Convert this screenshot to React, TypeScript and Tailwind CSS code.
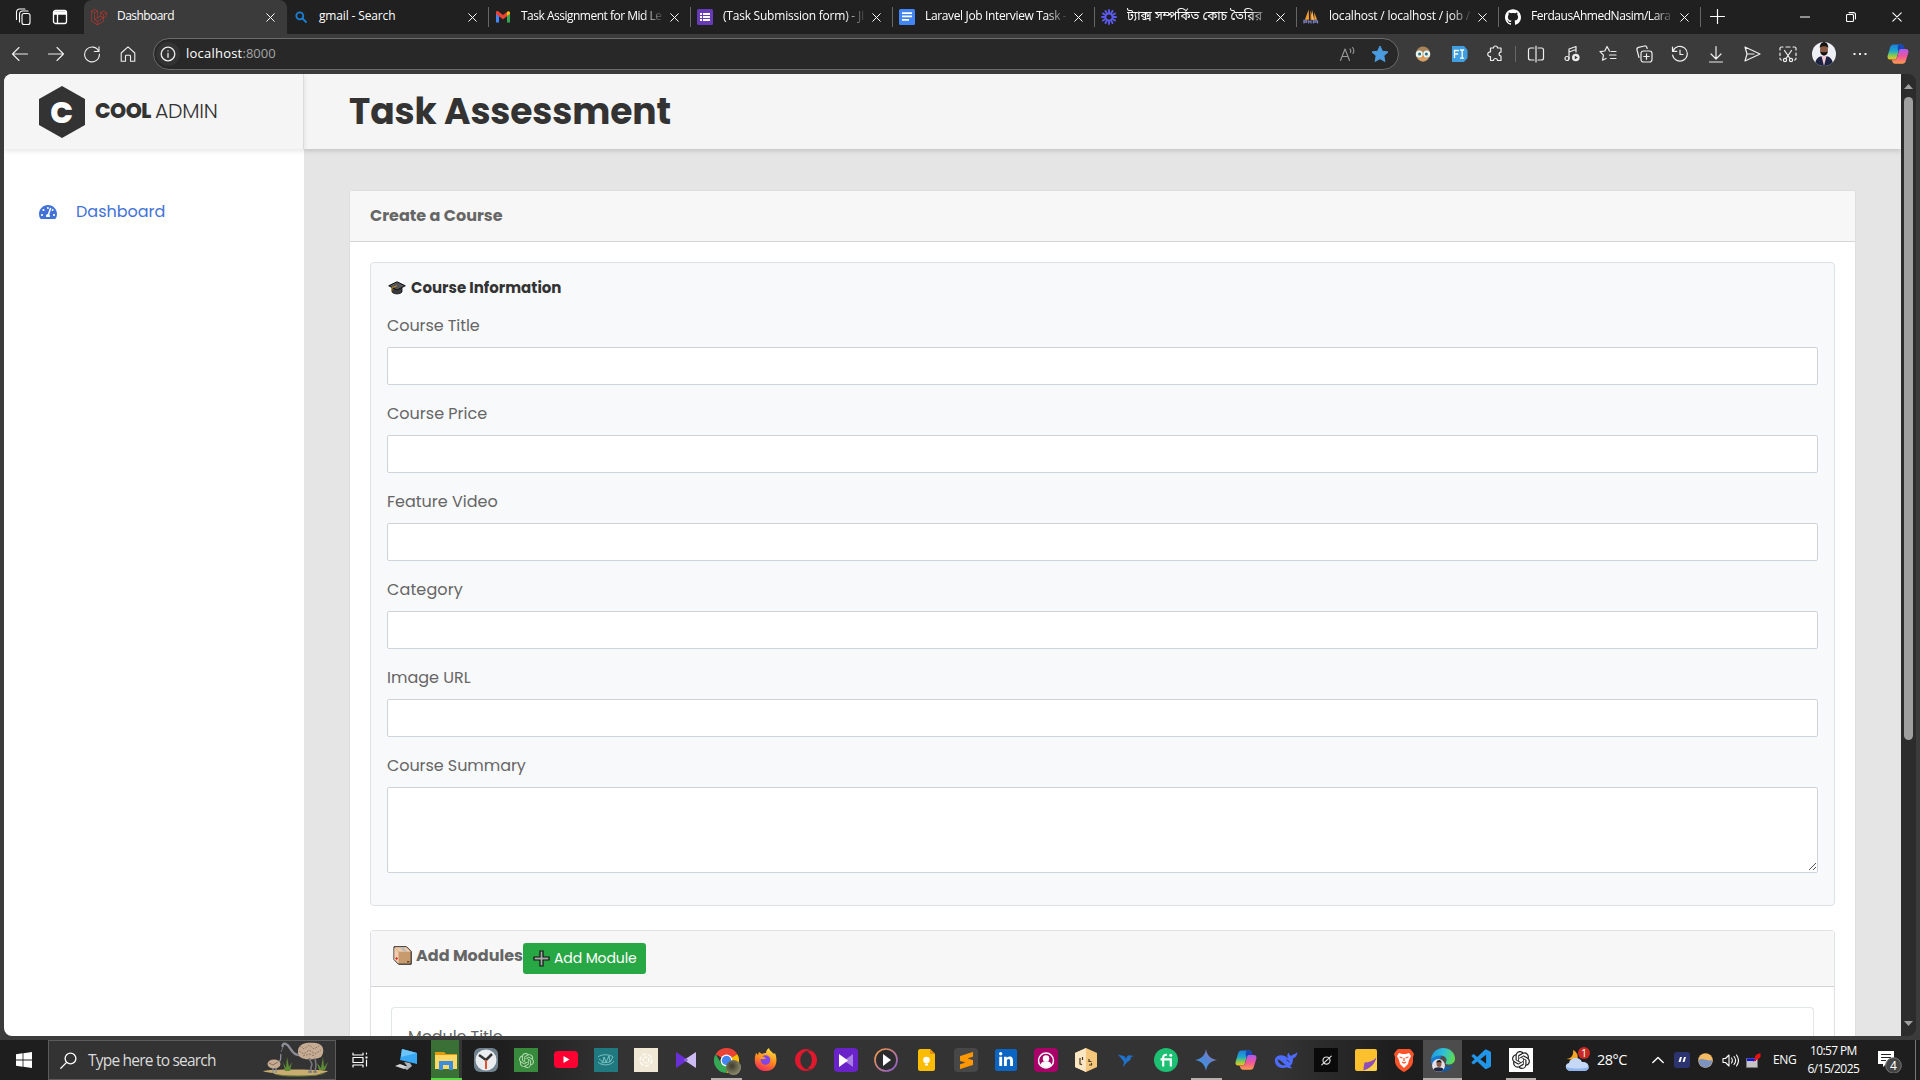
import React, { useLayoutEffect, useRef, useState } from "react";
import {
  SiLaravel, SiGithub, SiOpenai, SiSublimetext, SiOpera,
} from "react-icons/si";
import { FaLinkedinIn, FaTachometerAlt } from "react-icons/fa";
import { VscVscode } from "react-icons/vsc";

/* Text set to a given advance width through letter spacing. */
function Fit({ w, children, className = "" }: { w: number; children: string; className?: string }) {
  const ref = useRef<HTMLSpanElement>(null);
  const [ls, setLs] = useState(0);
  useLayoutEffect(() => {
    if (ref.current) setLs((w - ref.current.offsetWidth) / children.length);
  }, []);
  return (
    <span ref={ref} className={"inline-block whitespace-nowrap " + className} style={{ letterSpacing: ls + "px" }}>
      {children}
    </span>
  );
}

type SvgProps = { size?: number; box?: string; className?: string; children: React.ReactNode; sw?: number };
const Line = ({ size = 18, box = "0 0 18 18", className = "", children, sw = 1.1 }: SvgProps) => (
  <svg width={size} height={size} viewBox={box} fill="none" stroke="currentColor" strokeWidth={sw} strokeLinecap="round" strokeLinejoin="round" className={"shrink-0 " + className}>
    {children}
  </svg>
);

const X = ({ size = 9 }: { size?: number }) => (
  <Line size={size} box="0 0 10 10"><path d="M.8.8l8.4 8.4M9.2.8L.8 9.2" /></Line>
);

function Copilot({ size = 22 }: { size?: number }) {
  return (
    <svg width={size} height={size} viewBox="0 0 24 24" className="shrink-0">
      <defs>
        <linearGradient id="cpa" x1="0" y1="0" x2="0" y2="1"><stop offset="0" stopColor="#1b7de0" /><stop offset=".45" stopColor="#1fa8c9" /><stop offset=".75" stopColor="#8ccb4a" /><stop offset="1" stopColor="#f5c518" /></linearGradient>
        <linearGradient id="cpb" x1="0" y1="0" x2="0" y2="1"><stop offset="0" stopColor="#a95bf0" /><stop offset=".5" stopColor="#f0559a" /><stop offset="1" stopColor="#fb9a4b" /></linearGradient>
      </defs>
      <path d="M7 1.5h8.5c1.4 0 2.2.8 2.6 2L19 7h-3.5c-1.7 0-2.5.9-3 2.5L10.600 16c-.5 1.500-1.200 2-2.600 2H3.500C1 18 .2 16.500.7 14L3.500 4.500C4.100 2.500 5.200 1.500 7 1.500z" fill="url(#cpa)" />
      <path d="M12.500 1.500h3.200c1.400 0 2.200.8 2.600 2L19 7h-3.500c-1.700 0-2.400.9-3 2.500l-1-4z" fill="#1647b5" />
      <path d="M17 22.500H8.500c-1.400 0-2.200-.8-2.600-2L5 18h3c1.700 0 2.500-.9 3-2.500L13.400 8c.5-1 1.200-1.500 2.600-1.500h4.500c2.500 0 3.300 1.500 2.800 4l-2.800 9c-.6 2-1.700 3-3.500 3z" fill="url(#cpb)" />
    </svg>
  );
}

const favicons: Record<string, React.ReactNode> = {
  laravel: <SiLaravel size={16} color="#d8342b" />,
  search: <Line size={12} box="0 0 12 12" sw={1.8} className="text-[#1a7fd4]"><circle cx="4.800" cy="4.800" r="3.500" /><path d="M7.500 7.500l3.500 3.500" /></Line>,
  gmail: (
    <svg width="16" height="16" viewBox="0 0 16 16"><path d="M1 3.500v10h3V7z" fill="#4285f4" /><path d="M15 3.500v10h-3V7z" fill="#34a853" /><path d="M1 3.500c0-1.500 1.500-1.800 2.500-1L8 6l4.500-3.500V7L8 10.300 1 5.200z" fill="#ea4335" /><path d="M12 7V3c1-1 3-1 3 1v1z" fill="#fbbc04" /></svg>
  ),
  forms: (
    <svg width="16" height="16" viewBox="0 0 16 16"><rect width="16" height="16" rx="1.500" fill="#673ab7" /><path d="M3 4h2v2H3zM6 4h7v2H6zM3 7h2v2H3zM6 7h7v2H6zM3 10h2v2H3zM6 10h7v2H6z" fill="#fff" /></svg>
  ),
  docs: (
    <svg width="16" height="16" viewBox="0 0 16 16"><rect width="16" height="16" rx="1.500" fill="#4285f4" /><path d="M3 3.200h10v1.700H3zM3 6.600h10v1.700H3zM3 10h7v1.700H3z" fill="#fff" /></svg>
  ),
  sun: (
    <svg width="16" height="16" viewBox="0 0 16 16" stroke="#5b5bf0" strokeWidth="1.900" strokeLinecap="round" fill="none">
      {[0, 30, 60, 90, 120, 150, 180, 210, 240, 270, 300, 330].map((a) => <path key={a} d="M8 1v3.200" transform={`rotate(${a} 8 8)`} />)}
      <circle cx="8" cy="8" r="3.400" strokeWidth="1.600" />
    </svg>
  ),
  pma: (
    <svg width="17" height="16" viewBox="0 0 17 16"><path d="M6 0L2 11h4.500zM8 1v10h3.500zM12 3v8h3z" fill="#f59b2d" /><path d="M9.500 0v11h2.500z" fill="#f7b866" /><path d="M1 15v-3.500h3v2H1.500M6 11.500V15M6 13h2.500M8.500 11.500V15M11 15v-3.500h3v2h-2.500M15.500 11.500V15" fill="none" stroke="#7d86c2" strokeWidth="1.200" /></svg>
  ),
  github: <SiGithub size={16} color="#fff" />,
};

const tabs = [
  { icon: "laravel", title: "Dashboard", w: 57 },
  { icon: "search", title: "gmail - Search", w: 76 },
  { icon: "gmail", title: "Task Assignment for Mid Le", w: 141 },
  { icon: "forms", title: "(Task Submission form) - JI", w: 141 },
  { icon: "docs", title: "Laravel Job Interview Task -", w: 141 },
  { icon: "sun", title: "ট্যাক্স সম্পর্কিত কোচ তৈরির", w: 0 },
  { icon: "pma", title: "localhost / localhost / job /", w: 141 },
  { icon: "github", title: "FerdausAhmedNasim/Lara", w: 140 },
];

function TabStrip() {
  return (
    <div className="flex h-[34px] bg-[#202020] text-white">
      <div className="flex w-[84px] items-center gap-[19px] pl-[15px]">
        <Line size={18}><rect x="7" y="5.500" width="8" height="11" rx="2" /><path d="M4.500 14V6a3 3 0 0 1 3-3h5.500M1.500 11.500V4a3 3 0 0 1 3-3H10" /></Line>
        <Line size={16} box="0 0 16 16" sw={1.3}><rect x="1.500" y="1.500" width="13" height="13" rx="2" /><path d="M2 3h12v2H2z" fill="currentColor" /><path d="M5.500 5v9" /></Line>
      </div>
      {tabs.map((t, i) => (
        <div key={t.title} className={"relative flex items-center " + (i === 0 ? "w-[203px] rounded-t-lg bg-[#3b3b3b] pl-[7px]" : "w-[202px] pl-1.5")}>
          <span className="flex w-4 shrink-0 justify-center">{favicons[t.icon]}</span>
          <span className={"ml-[10px] w-[141px] shrink-0 text-[12px] leading-[20px] -translate-y-px " + (i > 1 ? "[mask-image:linear-gradient(to_right,#000_86%,#0002)]" : "")}>
            {t.w ? <Fit w={t.w}>{t.title}</Fit> : <span className="whitespace-nowrap text-[12.5px]">{t.title}</span>}
          </span>
          <span className="ml-[8px]"><X /></span>
          {i > 0 && <span className="absolute right-0 top-[7px] h-5 w-px bg-[#666]" />}
        </div>
      ))}
      <div className="flex grow items-center pl-[9px] -translate-y-px"><Line size={15} box="0 0 14 14"><path d="M7 .5v13M.5 7h13" /></Line></div>
      <div className="flex items-center">
        <span className="flex w-[46px] justify-center"><Line size={10} box="0 0 10 10"><path d="M0 5h10" /></Line></span>
        <span className="flex w-[46px] justify-center"><Line size={10} box="0 0 10 10"><rect x=".5" y="2.500" width="7" height="7" rx="1" /><path d="M3 .6h4.500a2 2 0 0 1 2 2V7" /></Line></span>
        <span className="flex w-[46px] justify-center"><X size={10} /></span>
      </div>
    </div>
  );
}

const Slot = ({ children }: { children: React.ReactNode }) => <span className="flex w-9 shrink-0 items-center justify-center">{children}</span>;

function Toolbar() {
  return (
    <div className="flex h-10 items-center bg-[#3b3b3b] pl-[2px] text-[#eee]">
      <Slot><Line><path d="M16.500 9h-15M8 2.500L1.500 9 8 15.500" /></Line></Slot>
      <Slot><Line><path d="M1.500 9h15M10 2.500L16.500 9 10 15.500" /></Line></Slot>
      <Slot><Line><path d="M15.800 6.500A7.400 7.400 0 1 0 16.400 9M16 1.800v4.700h-4.700" /></Line></Slot>
      <Slot><Line><path d="M2.200 8L9 1.800 15.800 8v8.200h-4.300V11c0-.5-.3-.8-.8-.8H7.300c-.5 0-.8.300-.8.800v5.200H2.200z" /></Line></Slot>
      <div className="ml-[7px] flex h-8 w-[1246px] items-center rounded-full border border-[#6b6b6b] bg-[#282828] pl-[2px] pr-[9px]">
        <span className="flex h-[24px] w-[24px] items-center justify-center rounded-full bg-[#333]">
          <Line size={16} box="0 0 16 16" sw={1.300}><circle cx="8" cy="8" r="6.800" /><path d="M8 7.500v3.800M8 4.800v.2" /></Line>
        </span>
        <span className="ml-[6px] text-[13px]"><Fit w={56} className="text-white">localhost</Fit><Fit w={33} className="text-[#a5a5a5]">:8000</Fit></span>
        <span className="ml-auto flex items-center gap-[14px]">
          <Line className="text-[#999]" sw={1.1}><path d="M1.500 15.500L6 4l4.500 11.500M3 11.500h6M11 4c1 1 1 2.500.5 3.500M13.500 2.500c1.500 1.700 1.500 4.300.5 6" /></Line>
          <svg width="18" height="18" viewBox="0 0 18 18"><path d="M9 1l2.400 5.200 5.600.7-4.200 3.900 1.100 5.700L9 13.700l-4.900 2.800 1.100-5.700L1 6.900l5.600-.7z" fill="#4b9be0" stroke="#4b9be0" strokeLinejoin="round" /></svg>
        </span>
      </div>
      <span className="w-[6px]" />
      <Slot>
        <svg width="16" height="16" viewBox="0 0 16 16"><ellipse cx="8" cy="8" rx="7.300" ry="7.600" fill="#a9835a" /><path d="M3 12c2-2 8-2 10 0-2 4.500-8 4.500-10 0z" fill="#d9a066" /><circle cx="4.300" cy="8" r="3.500" fill="#e8f4f4" /><circle cx="11.700" cy="8" r="3.500" fill="#e8f4f4" /><circle cx="4.600" cy="8" r="1.500" fill="#2b6d73" /><circle cx="11.400" cy="8" r="1.500" fill="#2b6d73" /><path d="M7 10h2l-1 2.500z" fill="#f08a24" /></svg>
      </Slot>
      <Slot>
        <svg width="17" height="16" viewBox="0 0 17 16"><path d="M1 0h12l3.500 4v8L13 16H1z" fill="#3f9fe0" /><path d="M3.500 12V4.500h4.300M3.500 8h3.700M9 4h1.500l.7.700.7-.7h1.200M9 12.200h1.500l.7-.7.7.7h1.200M11.200 4.500v7.200" fill="none" stroke="#fff" strokeWidth="1.300" /></svg>
      </Slot>
      <Slot><Line sw={1.2}><path d="M5 3h2.500a2 2 0 0 1 4 0H15v4.200a1.900 1.900 0 0 0 0 3.800v4.500h-3.500a2 2 0 0 0-4 0H4.500V11.500a2.300 2.300 0 1 1 0-4.500V3z" /></Line></Slot>
      <span className="mx-[2px] h-4 w-px bg-[#666]" />
      <Slot><Line sw={1.2}><path d="M7 3H3.500a2 2 0 0 0-2 2v8c0 1.100.9 2 2 2H7M11 3h3.500c1.100 0 2 .9 2 2v8a2 2 0 0 1-2 2H11M9 1v16" /></Line></Slot>
      <Slot><Line sw={1.2}><circle cx="4" cy="13.500" r="2" /><path d="M6 13.500V4l7-2.500V7M6 7l7-2.500" /><circle cx="12.800" cy="12.500" r="3.800" fill="currentColor" stroke="none" /><path d="M11.800 10.800l3 1.700-3 1.700z" fill="#333" stroke="none" /></Line></Slot>
      <Slot><Line sw={1.2}><path d="M10.500 6L8 1.500 5.800 6 1 6.600l3.500 3.600-1 5L7 13.500M12 6.500h5M10.500 10h6.500M11.500 13.500H17" /></Line></Slot>
      <Slot><Line sw={1.2}><rect x="6" y="6" width="11" height="11" rx="2.500" /><path d="M11.500 8.800v5.400M8.800 11.500h5.400M4 12.500l-2-7.500C1.600 3.500 2 2.700 3.500 2.300l6-1.300c1.300-.2 2 .3 2.400 1.500l.3 1" /></Line></Slot>
      <Slot><Line sw={1.2}><path d="M1.500 2v4.300h4.300M2 6A7.400 7.400 0 1 1 1.600 10M9 5v4.500h3" /></Line></Slot>
      <Slot><Line sw={1.2}><path d="M9 1.500v12M4 9l5 5 5-5M2.500 17h13" /></Line></Slot>
      <Slot><Line sw={1.2}><path d="M2 2l15 7-15 7 2-7zM4 9h7" /></Line></Slot>
      <Slot><Line sw={1.2}><path d="M1 5V3.500C1 2.500 1.500 2 2.500 2H4M7 2h4M14 2h1.500c1 0 1.500.5 1.500 1.500V5M1 8v2.500M17 8v2.500M1 13v.5c0 1 .5 1.500 1.500 1.500M17 13v.5c0 1-.5 1.500-1.500 1.500M5.500 5.500l5.500 8M12.500 5.500L7 13.500" /><circle cx="6" cy="15" r="1.600" /><circle cx="12" cy="15" r="1.600" /></Line></Slot>
      <Slot>
        <svg width="24" height="24" viewBox="0 0 24 24"><clipPath id="av"><circle cx="12" cy="12" r="12" /></clipPath><g clipPath="url(#av)"><rect width="24" height="24" fill="#eef0f6" /><path d="M3 24c0-7 3-10 9-10s9 3 9 10z" fill="#1d2340" /><path d="M9.500 14h5L12 24z" fill="#f3c9d6" /><ellipse cx="12" cy="7.500" rx="4" ry="5.600" fill="#8a5a44" /><path d="M7.800 6c0-8 8.500-8 8.500 0-1.500-2.500-7-2.500-8.500 0zM8.300 9.500c1 1 6.400 1 7.400 0 0 5.500-7.400 5.500-7.400 0z" fill="#181414" /></g></svg>
      </Slot>
      <Slot><svg width="14" height="4"><path d="M.5 1h2v2h-2zM6 1h2v2H6zM11.500 1h2v2h-2z" fill="#eee" /></svg></Slot>
      <span className="ml-[9px]"><Copilot /></span>
    </div>
  );
}

const GradCap = () => (
  <svg width="18" height="14" viewBox="0 0 18 14" className="shrink-0"><path d="M4 6.500v4.500c2 2.500 8 2.500 10 0V6.500z" fill="#3a3a3c" stroke="#111" strokeWidth=".8" /><path d="M.7 4.800L9 .8l8.300 4L9 9z" fill="#55565a" stroke="#111" strokeLinejoin="round" /><path d="M9 4.800L4.200 6.500l-.5 4" fill="none" stroke="#c98a1b" strokeWidth="1" /></svg>
);
const Box = () => (
  <svg width="19" height="19" viewBox="0 0 19 19" className="shrink-0"><path d="M1 .8h12.500L18.200 5.500v12.700H5.500L1 13.500z" fill="#c89b6f" stroke="#111" strokeLinejoin="round" /><path d="M1.300 1.200h12.200L17.800 5.800H5.800z" fill="#ecc9a8" /><path d="M1.300 1.500L5.500 6v11.800l-4.200-4.500z" fill="#f1cdb0" /><path d="M7 1.200h3l4 4.600h-3z" fill="#b9b9b9" /><path d="M3.500 11l1.500 1.500-1.500 1.500L2.300 12.500z" fill="#e02020" /><path d="M14 15h2.500v1.500H14z" fill="#6b4a2a" /></svg>
);

const fields = [
  { label: "Course Title", w: 93 },
  { label: "Course Price", w: 100 },
  { label: "Feature Video", w: 111 },
  { label: "Category", w: 76 },
  { label: "Image URL", w: 84 },
];

function Page() {
  return (
    <div className="flex h-[962px] w-[1912px] overflow-hidden rounded-lg bg-[#2c2c2c] font-['Poppins',Inter,sans-serif] text-[#666]">
      <aside className="flex w-[300px] shrink-0 flex-col bg-white">
        <div className="z-10 flex h-[75px] shrink-0 items-center border-r border-[#dadada] bg-[#f5f5f5] pl-[35px] text-[#333] shadow-[0_2px_5px_rgba(0,0,0,0.1)]">
          <svg width="46" height="52" viewBox="0 0 46 52"><path d="M23 0l23 13v26L23 52 0 39V13z" fill="#333" /><text x="22.500" y="36.500" textAnchor="middle" fontFamily="Poppins, Lato, sans-serif" fontWeight="800" fontSize="30" fill="#fff">C</text></svg>
          <span className="ml-[10px] text-[20.500px]"><Fit w={56} className="font-extrabold">COOL</Fit><Fit w={63} className="ml-[4px] font-light">ADMIN</Fit></span>
        </div>
        <div className="mt-[47px] flex h-8 items-center pl-[35px] text-[16px] text-[#4272d7]">
          <FaTachometerAlt size={18} />
          <Fit w={89} className="ml-[19px]">Dashboard</Fit>
        </div>
      </aside>
      <main className="flex w-[1597px] shrink-0 flex-col bg-[#e5e5e5]">
        <header className="h-[75px] shrink-0 bg-[#f5f5f5] pl-[45px] text-[36px] font-bold leading-[76px] text-[#333] shadow-[0_2px_5px_rgba(0,0,0,0.15)]">
          <Fit w={322}>Task Assessment</Fit>
        </header>
        <div className="mx-[45px] mt-[41px] h-[900px] shrink-0 rounded-t-[3px] border border-[#dedede] bg-white">
          <div className="flex h-[51px] items-center rounded-t-[3px] border-b border-[#d4d5d8] bg-[#f7f7f7] pl-5 text-[16px] font-bold"><Fit w={133}>Create a Course</Fit></div>
          <div className="mx-5 mt-5">
            <section className="h-[644px] rounded border border-[#dee2e6] bg-[#f8f9fb] px-4 pt-[16px]">
              <h2 className="flex h-[18px] items-center gap-[5px] pl-[1px] text-[15px] font-bold text-[#333]"><GradCap /><Fit w={150}>Course Information</Fit></h2>
              <div className="mt-[12px]">
                {fields.map((f) => (
                  <div key={f.label} className="h-[88px]">
                    <label className="flex h-[37px] items-center pb-[3px] text-[16px]"><Fit w={f.w}>{f.label}</Fit></label>
                    <div className="mt-px h-[38px] rounded-[2px] border border-[#ced4da] bg-white" />
                  </div>
                ))}
                <label className="flex h-[37px] items-center pb-[3px] text-[16px]"><Fit w={139}>Course Summary</Fit></label>
                <div className="mt-px flex h-[86px] items-end justify-end rounded-[2px] border border-[#ced4da] bg-white">
                  <svg width="9" height="9" viewBox="0 0 9 9" className="mb-px"><path d="M1 8l7-7M5 8l3-3" stroke="#555" fill="none" /></svg>
                </div>
              </div>
            </section>
            <section className="mt-6 rounded-t border border-b-0 border-[#dee2e6]">
              <div className="flex h-[56px] items-start border-b border-[#d4d5d8] bg-[#f7f7f7] pl-[22px] text-[16px] font-bold">
                <span className="mt-[15px]"><Box /></span>
                <span className="ml-[4px] mt-[13px] leading-[24px]"><Fit w={107}>Add Modules</Fit></span>
                <button className="mt-[12px] flex h-[31px] w-[123px] items-center rounded-[3px] bg-[#28a745] pl-[10px] text-[14px] font-normal text-white">
                  <svg width="17" height="17" viewBox="0 0 17 17"><path d="M7 1h3v6h6v3h-6v6H7v-6H1V7h6z" fill="#a9a9a9" stroke="#111" strokeWidth="1.200" /></svg>
                  <Fit w={83} className="ml-[4px]">Add Module</Fit>
                </button>
              </div>
              <div className="mx-5 mt-5 rounded-t border border-b-0 border-[#e2e5e9] pl-4 pt-[17px] text-[16px]"><Fit w={94}>Module Title</Fit></div>
            </section>
          </div>
        </div>
      </main>
      <div className="flex w-[15px] shrink-0 flex-col items-center pt-[10px]">
        <svg width="9" height="5"><path d="M4.500 0L9 5H0z" fill="#9f9f9f" /></svg>
        <div className="mt-[8px] h-[643px] w-[9px] rounded-full bg-[#9f9f9f]" />
        <svg width="9" height="5" className="mt-auto mb-[10px]"><path d="M4.500 5L9 0H0z" fill="#9f9f9f" /></svg>
      </div>
    </div>
  );
}

const Tile = ({ bg, children }: { bg: string; children: React.ReactNode }) => (
  <span className={"flex h-6 w-6 items-center justify-center " + bg}>{children}</span>
);

const apps: { el: React.ReactNode; on?: boolean }[] = [
  { el: <svg width="24" height="22" viewBox="0 0 24 22"><path d="M8 0l15 4v11L6 11z" fill="#38a8f5" /><path d="M8 0l15 4L7 8z" fill="#6cc4fa" /><path d="M1 17l5-2 8 3-4 2z" fill="#d2d6da" /><path d="M10 13l6 1 2 3-5 4-3-2 3-2z" fill="#aeb6bd" /></svg> },
  { el: <svg width="22" height="19" viewBox="0 0 22 19"><path d="M0 1h9l2 2h11v15H0z" fill="#e39a0c" /><path d="M0 4h22v14H0z" fill="#ffd764" /><path d="M4 19V10h14v9h-4v-5H8v5z" fill="#3b8ede" /></svg> },
  { el: <svg width="24" height="24" viewBox="0 0 24 24"><rect width="24" height="24" rx="6" fill="#71828f" /><circle cx="12" cy="12" r="10.500" fill="#e9edf0" /><path d="M12 12L5 7M12 12l6-6" stroke="#333" strokeWidth="2.500" /><path d="M12 12v9" stroke="#e2542a" strokeWidth="2" /></svg> },
  { el: <Tile bg="bg-[#388a3c]"><SiOpenai size={15} color="#b5dcb0" /></Tile> },
  { el: <svg width="24" height="18" viewBox="0 0 24 18"><rect width="24" height="17" rx="4" fill="#ff0033" /><path d="M9.500 5l6 3.500-6 3.500z" fill="#fff" /></svg> },
  { el: <Tile bg="bg-[#20797e]"><svg width="18" height="12" viewBox="0 0 18 12" fill="none" stroke="#8ed0d2" strokeWidth=".8"><path d="M1 8c3 4 13 4 16-1M2 5l4 3 1-5 2 5 3-6 1 6 3-5M1 3c3-3 12-3 15 0M4 9l9-1" /></svg></Tile> },
  { el: <Tile bg="bg-[#f0e8d5]"><svg width="16" height="16" viewBox="0 0 16 16" fill="none" stroke="#fff" strokeWidth="1.200"><circle cx="8" cy="8" r="6" strokeDasharray="4 2" /><circle cx="8" cy="8" r="3" strokeDasharray="3 1" /></svg></Tile> },
  { el: <svg width="22" height="18" viewBox="0 0 22 18"><path d="M1 1l12 8L1 17z" fill="#6a2fd6" /><path d="M21 1v16L9 9z" fill="#cdbcf2" /><path d="M9 9l2.500-1.700L13 9l-1.500 1.700z" fill="#8d62e0" /></svg> },
  { el: <span className="relative"><svg width="25" height="25" viewBox="0 0 24 24"><path d="M12 12L1.600 6A12 12 0 0 1 22.400 6z" fill="#ea4335" /><path d="M12 12l10.400-6A12 12 0 0 1 12 24z" fill="#fbbc04" /><path d="M12 12v12A12 12 0 0 1 1.600 6L7 15z" fill="#34a853" /><circle cx="12" cy="12" r="5.700" fill="#fff" /><circle cx="12" cy="12" r="4.500" fill="#4285f4" /></svg><span className="absolute -bottom-0.5 -right-0.5 h-[15px] w-[15px] rounded-full bg-[radial-gradient(circle_at_40%_40%,#3d3a2d,#7d7c60_60%,#b5b5a0)]" /></span>, on: true },
  { el: <svg width="24" height="24" viewBox="0 0 24 24"><defs><linearGradient id="ff" x1=".7" y1="0" x2=".3" y2="1"><stop offset="0" stopColor="#ffe147" /><stop offset=".5" stopColor="#ff8a1d" /><stop offset="1" stopColor="#f5295b" /></linearGradient></defs><path d="M15 0c0 2 3 4 5 6l1-1c3 7 2 18-9 18S-1 13 2 5l2 2 1-3 3 2c1-1 3-1 4-1 0-2 1-4 3-5z" fill="url(#ff)" /><circle cx="11.500" cy="12" r="4.800" fill="#8046e8" /><path d="M5 9c3-2 6 0 7 2-3 0-5 1-7-2z" fill="#ff9a20" /></svg> },
  { el: <SiOpera size={22} color="#e0182d" /> },
  { el: <Tile bg="bg-[#6a22c9] rounded-sm"><svg width="16" height="13" viewBox="0 0 16 13"><path d="M15 0v13L6 6.500z" fill="#a67de3" /><path d="M1 0l9 6.500L1 13z" fill="#fff" /></svg></Tile> },
  { el: <svg width="24" height="24" viewBox="0 0 24 24"><defs><linearGradient id="mp" x1="0" y1="0" x2="1" y2="1"><stop offset="0" stopColor="#f59a3e" /><stop offset="1" stopColor="#8b5bd8" /></linearGradient></defs><circle cx="12" cy="12" r="11" fill="#2c2c2e" stroke="url(#mp)" strokeWidth="1.700" /><path d="M9 6l8 6-8 6z" fill="#fff" /></svg> },
  { el: <svg width="17" height="22" viewBox="0 0 17 22"><path d="M2 0h10l5 5v15c0 1-1 2-2 2H2c-1 0-2-1-2-2V2C0 1 1 0 2 0z" fill="#fbbc04" /><path d="M12 0l5 5h-5z" fill="#e98f08" /><circle cx="8.500" cy="11" r="3.300" fill="#fff" /><path d="M7 14.500h3v2H7z" fill="#fff" /></svg> },
  { el: <Tile bg="bg-[#474747] rounded-sm"><SiSublimetext size={17} color="#ff9800" /></Tile> },
  { el: <span className="flex h-[22px] w-[22px] items-center justify-center rounded-[2px] bg-[#0a66c2]"><FaLinkedinIn size={16} color="#fff" /></span> },
  { el: <Tile bg="bg-[#a80068] rounded-sm"><Line size={18} sw={1.500} className="text-white"><circle cx="9" cy="9.500" r="7.500" /><circle cx="9" cy="7.500" r="2.500" fill="currentColor" /><path d="M4.500 14c0-4 9-4 9 0-2 2-7 2-9 0z" fill="currentColor" /></Line></Tile> },
  { el: <svg width="22" height="24" viewBox="0 0 22 24"><path d="M11 0l11 5v14l-11 5L0 19V5z" fill="#f3c67c" /><path d="M11 0L0 5v14l11 5z" fill="#fbe6c4" /><path d="M5 10v6l2 .6M7.500 9v3M14 11v2.500h2.500M14 17h2.500v-2" stroke="#4a3823" strokeWidth="1.200" fill="none" /></svg> },
  { el: <svg width="16" height="13" viewBox="0 0 16 13"><path d="M0 .5l6.500 1.700L8 5c0-3 3-4.500 5-3.500L16 2l-3 1c0 4-3 4-4.500 6L5 13l1-5z" fill="#2072c9" /></svg> },
  { el: <span className="flex h-6 w-6 items-center justify-center rounded-full bg-[#1dbf73]"><svg width="13" height="14" viewBox="0 0 13 14"><path d="M3.200 13.500V4.500c0-2 1.300-3 3.800-2.700M.5 6.300h10.300v7.200" fill="none" stroke="#fff" strokeWidth="2.200" /><circle cx="10.800" cy="2.200" r="1.500" fill="#fff" /></svg></span> },
  { el: <svg width="22" height="22" viewBox="0 0 24 24"><defs><linearGradient id="gm" x1="0" y1="1" x2="1" y2="0"><stop offset="0" stopColor="#3e9de0" /><stop offset=".5" stopColor="#4f86d8" /><stop offset="1" stopColor="#b57299" /></linearGradient></defs><path d="M12 0c1 7 5 11 12 12-7 1-11 5-12 12-1-7-5-11-12-12C7 11 11 7 12 0z" fill="url(#gm)" /></svg>, on: true },
  { el: <Copilot /> },
  { el: <svg width="24" height="19" viewBox="0 0 24 19"><path d="M14.500 1.500c.5 2 1.500 3 3 3.500 1-2 4-1.500 6-4-.5 4.500-2.500 5.500-4.500 6.500 0 4-1 6-3 7.500l2 2c-2 .5-3.500 0-5-.8C5 19 0 14 1 8c1-3 5-5 10-3l3 2.500c-1-2-1-4 .5-6z" fill="#4d6bfe" /><path d="M3.500 8.500c3-.5 5.500 4 8.500 5.500-4 1-7.500-1-8.500-5.500z" fill="#333" /><path d="M12.500 9.500c1.500-.5 2.500.5 2.500 1.800" stroke="#333" fill="none" /></svg> },
  { el: <Tile bg="bg-[#0a0a0a]"><Line size={11} box="0 0 14 14" sw={1.500} className="text-[#ddd]"><circle cx="7" cy="7" r="4.500" /><path d="M1 12.500L13 1.500" /></Line></Tile> },
  { el: <svg width="22" height="22" viewBox="0 0 22 22"><rect width="22" height="22" rx="2" fill="#fbc02d" /><path d="M21.500 8.500c-1 6-6 11-13 13 0-3 .5-6 1-8 4 0 9-1.500 12-5z" fill="#8d4dbb" /><path d="M22 8v12c0 1-1 2-2 2H8c7-2 12-7 14-14z" fill="#fcd24c" /></svg> },
];

function EdgeIcon() {
  return (
    <svg width="24" height="24" viewBox="0 0 24 24">
      <defs>
        <linearGradient id="ed" x1="0" y1=".3" x2="1" y2=".5"><stop offset="0" stopColor="#2196e0" /><stop offset=".5" stopColor="#2fc0d8" /><stop offset="1" stopColor="#5fdc4f" /></linearGradient>
        <linearGradient id="ee" x1="0" y1="0" x2="1" y2="1"><stop offset="0" stopColor="#1b86dc" /><stop offset="1" stopColor="#124f96" /></linearGradient>
      </defs>
      <path d="M0 12C2 7 7 6 11 8c-3 2-3 7 1 9.500 3 2 7 1.500 10-.5-2 4-6 7-11 7C5 24 0 19 0 12z" fill="url(#ee)" />
      <path d="M0 11.500C.5 5 5.500 0 12 0c7 0 12 5 12 10.500 0 4-3 6-6.500 6-2.500 0-3.500-1-2.500-2.300C16.500 12 15 7.500 9.500 7.500 5 7.500 1.500 9 0 11.500z" fill="url(#ed)" />
      <circle cx="7.500" cy="17.500" r="6.500" fill="#e4dfe4" />
      <path d="M2.500 21.500c1-3 9-3 10 0-2 3-8 3-10 0z" fill="#23263f" /><ellipse cx="8" cy="16" rx="2.500" ry="3" fill="#8a5a48" /><path d="M5.300 15c0-4 5.500-4 5.500 0-1-1.300-4.500-1.300-5.500 0z" fill="#1c1616" />
    </svg>
  );
}

const Rheas = () => (
  <svg width="66" height="36" viewBox="0 0 66 36" className="shrink-0">
    <path d="M0 29c10-2 50-2 65 0-2 2-8 2-10 4-12 2-38 1-43-1-2-2-10-1-12-3z" fill="#c9ad70" /><path d="M12 32c10 2 42 2 50-1-2 4-46 5-50 1z" fill="#6d7f3a" />
    <path d="M22 29l-2-9 3 6 1-11 2 10 3-5-2 9zM56 28l-2-7 4 5 2-11 1 10 4-5-3 8z" fill="#5d8a35" />
    <path d="M35 8c1-7 10-8 18-7 8 1 9 9 5 14-6 3-19 4-23-2z" fill="#c6ab93" /><path d="M37 4l4 3 5-4 5 4 5-3M36 9l5 3 5-4 6 4 6-4M40 14l6-2 6 2" stroke="#8a705d" strokeWidth=".9" fill="none" strokeDasharray="2 1.200" />
    <path d="M36 13c-8 0-8-9-13-11-3-1-4 1-3 3" fill="none" stroke="#8c8d97" strokeWidth="2.400" /><path d="M20 5l-2 5" stroke="#6c6d75" />
    <path d="M46 16l3 6-2 8M52 16l1 7-1 7M45 30h4M50 30h4" stroke="#77777f" strokeWidth="1.600" fill="none" />
    <ellipse cx="11" cy="22" rx="6.500" ry="4.500" fill="#c6ab93" /><path d="M6 21l4 2 5-3" stroke="#8a705d" fill="none" /><path d="M16 20c3-2 1-6 2-8M10 26v5M13 26v5" stroke="#8c8d97" strokeWidth="1.300" fill="none" />
  </svg>
);

function Taskbar() {
  return (
    <div className="flex h-10 w-[1920px] bg-[linear-gradient(90deg,#1e1e1e_0,#1e1e1e_500px,#333_620px,#333_1280px,#1e1e1e_1390px,#1e1e1e_100%)] text-white">
      <div className="flex w-12 items-center justify-center"><svg width="16" height="16" viewBox="0 0 16 16"><path d="M0 2.200L6.600 1.300v6.300H0zM7.400 1.200L16 0v7.600H7.400zM0 8.400h6.600v6.400L0 13.800zM7.400 8.400H16V16l-8.600-1.200z" fill="#fff" /></svg></div>
      <div className="flex w-72 items-center border border-[#5c5c5c] bg-[#333] pl-[11px] pr-[6px]">
        <Line size={17} box="0 0 17 17" sw={1.300}><circle cx="10.500" cy="6.500" r="5.400" /><path d="M6.600 10.400L.8 16.200" /></Line>
        <span className="ml-[11px] translate-y-px text-[15.500px] text-[#dcdcdc]"><Fit w={128}>Type here to search</Fit></span>
        <span className="ml-auto"><Rheas /></span>
      </div>
      <div className="mr-[2px] flex w-12 items-center justify-center"><Line size={16} box="0 0 16 16" sw={1.200}><path d="M1 1v2h10V1M1 15v-2h10v2M1 5.500h10v5H1zM14.500 1v1M14.500 8v6" /><path d="M13.500 4.500h2v2h-2z" fill="currentColor" stroke="none" /></Line></div>
      {apps.map((a, i) => (
        <div key={i} className={"relative flex w-10 shrink-0 items-center justify-center " + (i === 1 ? "bg-[linear-gradient(90deg,transparent_5px,#3a6f35_5px,#3a6f35_33px,#353535_33px,#353535_36px,transparent_36px)]" : "")}>
          {a.el}
          {a.on && <span className="absolute bottom-0 h-[2px] w-[31px] bg-[#b5b0ac]" />}
          {i === 1 && <span className="absolute bottom-0 left-[5px] h-[2px] w-[31px] bg-[#4fe03c]" />}
        </div>
      ))}
      <div className="flex w-[37px] items-center justify-center pr-px"><svg width="20" height="24" viewBox="0 0 20 24"><path d="M4 1h12l2 2 2 3-1 3 0 5c-1 5-5 8-9 10-4-2-8-5-9-10V9L0 6l2-3z" fill="#fb542b" /><path d="M5 5l3 1h4l3-1 2 3-2 4-1 4-4 4-4-4-1-4-2-4z" fill="#fff" /><path d="M5.500 9l3 1M14.500 9l-3 1M8 14l2 1 2-1M10 10v3" stroke="#fb542b" strokeWidth="1.300" fill="none" /></svg></div>
      <div className="relative flex w-[39px] items-center justify-center bg-[#4c4c4c]"><EdgeIcon /><span className="absolute bottom-0 h-[2px] w-full bg-[#b5b0ac]" /></div>
      <div className="flex w-[39px] items-center justify-center"><VscVscode size={24} color="#2196e8" /></div>
      <div className="relative flex w-[40px] items-center justify-center"><Tile bg="bg-white"><SiOpenai size={18} color="#222" /></Tile><span className="absolute bottom-0 h-[2px] w-[30px] bg-[#b5b0ac]" /></div>
      <div className="ml-[24px] flex items-center">
        <svg width="26" height="26" viewBox="0 0 26 26"><path d="M1 12c5 0 8-4 7-9 4 2 6 6 4 10z" fill="#f5a623" /><path d="M6 24c-6 0-7-7-2-8 1-6 11-7 13-1 8-1 9 9 2 9z" fill="#c5d9f7" /><path d="M6 24c-3 0-5-2-5-4 8 2 16 2 23 0 0 2-2 4-5 4z" fill="#8fb4ee" /><circle cx="19" cy="6" r="6" fill="#c92b22" /><text x="19" y="9.500" textAnchor="middle" fontSize="10" fill="#fff" fontFamily="Noto Sans, sans-serif">1</text></svg>
        <span className="ml-[6px] text-[14.500px]"><Fit w={30}>28°C</Fit></span>
        <Line size={12} box="0 0 12 12" className="ml-[25px]" sw={1.400}><path d="M.8 8.500L6 3.500l5.200 5" /></Line>
        <span className="ml-[10px] flex h-4 w-4 items-center justify-center rounded-[3px] bg-[#2b346f]"><svg width="8" height="6"><path d="M2 0h2L2.500 5H.5zM6 0h2L6.500 5h-2z" fill="#fff" /></svg></span>
        <svg width="15" height="15" viewBox="0 0 15 15" className="ml-[8px]"><circle cx="7.500" cy="7.500" r="7.300" fill="#f6bb62" /><path d="M.5 7c4-3 9 2 14 0-.5 10-13.500 10-14 0z" fill="#7d93c0" /></svg>
        <Line size={17} box="0 0 17 15" className="ml-[9px]"><path d="M1 5.500v4h2.500L7 13V2L3.500 5.500zM9.500 5c1 1.500 1 3.500 0 5M12 3.500c2 2.500 2 5.500 0 8M14.500 2c2.500 3.500 2.500 7.500 0 11" /></Line>
        <svg width="15" height="15" viewBox="0 0 15 15" className="ml-[7px]"><path d="M.5 5.500h11v9H.5z" fill="#c4c4c4" stroke="#777" /><path d="M1 5.500h9V8H1z" fill="#1010f0" /><path d="M7 9l2.500-4-1-1 2-2.500L14.500 0v4l-2 2-1.500.5z" fill="#e81010" /></svg>
        <span className="ml-[12px] text-[12px]"><Fit w={23}>ENG</Fit></span>
        <div className="ml-[10px] flex w-[54px] flex-col items-center text-[12px] leading-[18px]"><Fit w={47}>10:57 PM</Fit><Fit w={52}>6/15/2025</Fit></div>
        <svg width="26" height="26" viewBox="0 0 26 26" className="ml-[17px]"><path d="M1 4h16v13H9l-3 3v-3H1z" fill="#fff" /><path d="M4 7.500h10M4 10.500h10M4 13.500h5" stroke="#222" /><circle cx="16.500" cy="18.500" r="7.800" fill="#444" stroke="#777" /><text x="16.500" y="23" textAnchor="middle" fontSize="12" fill="#fff" fontFamily="Noto Sans, sans-serif">4</text></svg>
      </div>
      <div className="ml-auto mr-1 w-px bg-[#777]" />
    </div>
  );
}

export default function App() {
  return (
    <div className="flex h-[1080px] w-[1920px] flex-col overflow-hidden bg-[#3b3b3b] font-['Open_Sans','Noto_Sans_Bengali',sans-serif]">
      <TabStrip />
      <Toolbar />
      <div className="mb-1 ml-1"><Page /></div>
      <Taskbar />
    </div>
  );
}
